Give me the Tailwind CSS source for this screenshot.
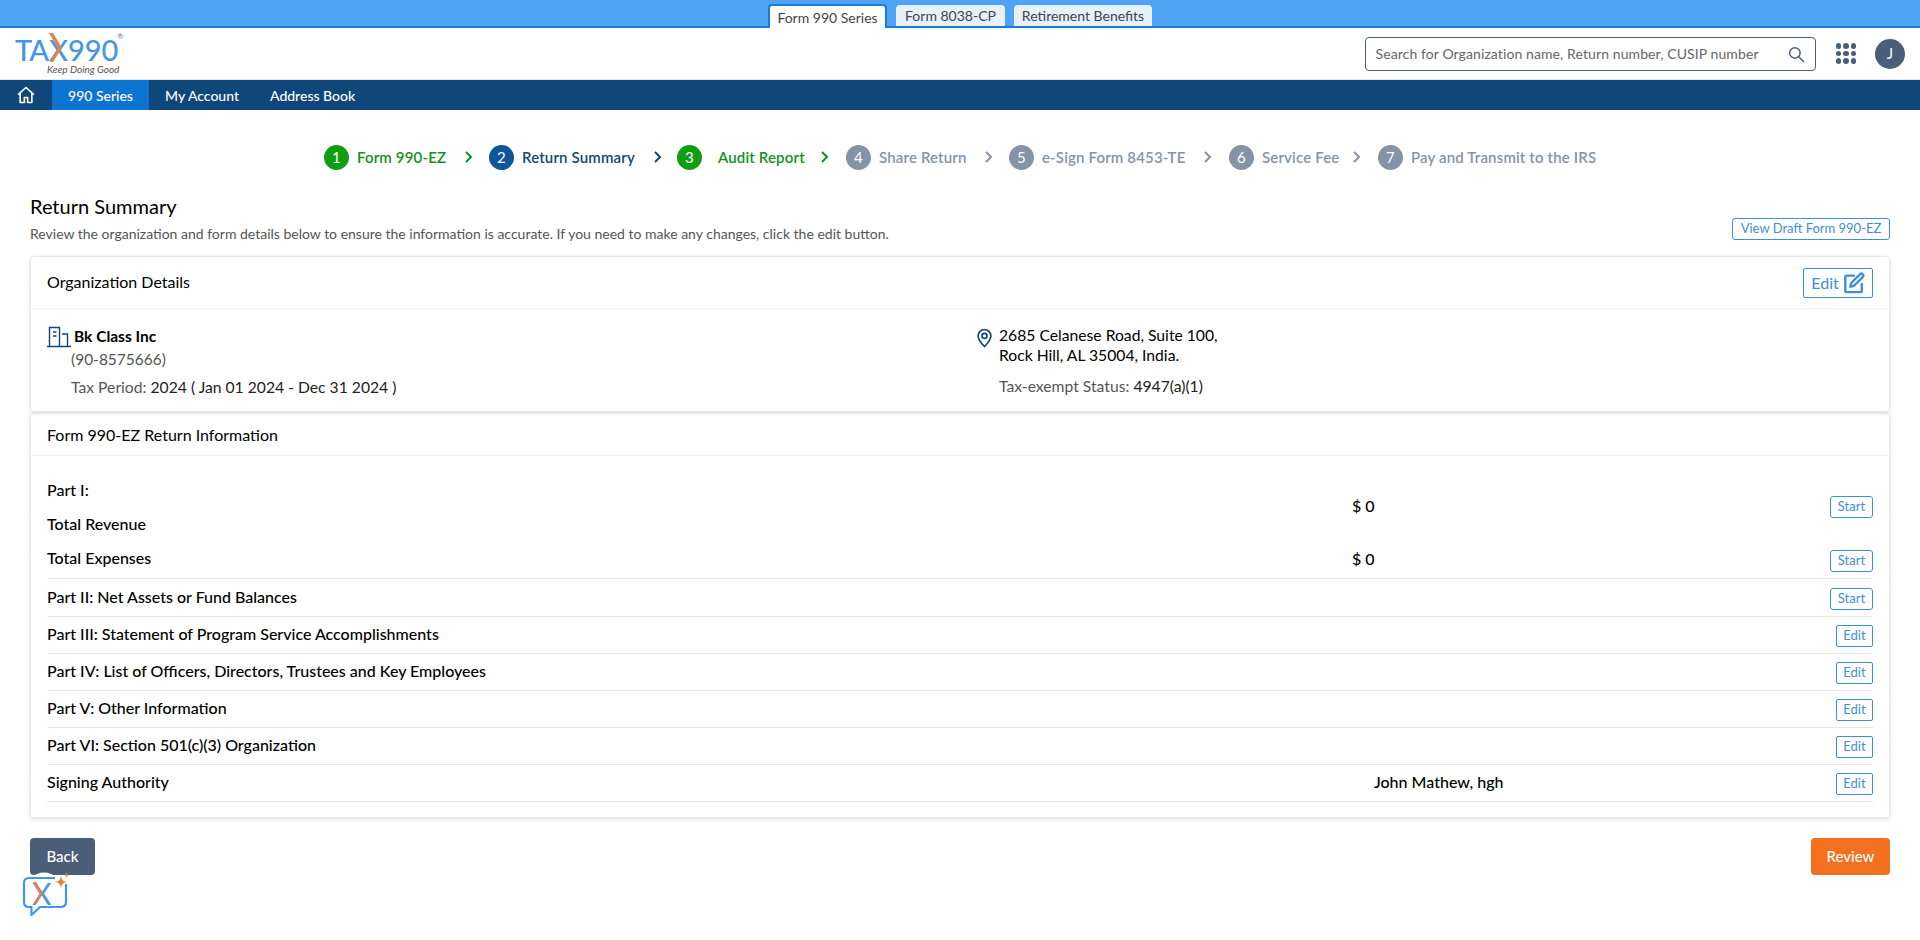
<!DOCTYPE html>
<html lang="en">
<head>
    <meta charset="UTF-8">
    <title>Return Summary</title>
    <script src="https://cdn.jsdelivr.net/npm/@tailwindcss/browser@4"></script>
</head>
<body class="bg-white h-[940px] overflow-hidden font-['Lato',sans-serif] text-[16px] text-black">
    <!-- Product tabs -->
    <div class="h-[28px] bg-[#4fa3f5] border-b-2 border-[#1a7bd9] flex items-end pl-[768px] gap-[9px] text-[14px] text-[#444]">
        <div class="h-[24px] -mb-[2px] w-[119px] bg-white border-2 border-b-0 border-[#1a7bd9] rounded-t flex items-center justify-center">Form 990 Series</div>
        <div class="h-[21px] w-[109px] bg-[#e6f1fd] rounded-t flex items-center justify-center">Form 8038-CP</div>
        <div class="h-[21px] w-[138px] bg-[#e6f1fd] rounded-t flex items-center justify-center">Retirement Benefits</div>
    </div>

    <!-- Header -->
    <div class="h-[52px] border-b border-gray-200 flex items-center pl-[15px] pr-[15px]">
        <div class="relative w-[112px] h-[50px]">
            <div class="flex text-[29px] leading-[26px] font-medium text-[#4596e6] pt-[8px]">
                <span class="tracking-[-1px]">TA</span><span class="ml-[1px]">X</span><span>990</span>
            </div>
            <svg class="absolute left-[33px] top-[4px]" width="15" height="30" viewBox="0 0 15 30"><path d="M1 0H5L14 15 5 29H2L10 15z" fill="#e8804a"/></svg>
            <span class="absolute left-[102px] top-[3px] text-[8px] text-gray-500 leading-none">®</span>
            <div class="absolute left-[32px] top-[34px] text-[10px] leading-[12px] italic text-[#555]">Keep Doing Good</div>
        </div>
        <div class="ml-auto w-[451px] h-[34px] border border-[#4a5e78] rounded flex items-center px-[10px] text-[14px] tracking-[0.1px] text-[#666]">
            <span>Search for Organization name, Return number, CUSIP number</span>
            <svg class="ml-auto" width="18" height="18" viewBox="0 0 24 24" fill="none" stroke="#4a5e78" stroke-width="2" stroke-linecap="round"><circle cx="10.5" cy="10.5" r="7"/><path d="M16 16l6 6"/></svg>
        </div>
        <div class="ml-[20px] grid grid-cols-3 gap-x-[2px] gap-y-[2px]">
            <span class="w-[5.5px] h-[5.5px] rounded-full bg-[#4a5e78]"></span><span class="w-[5.5px] h-[5.5px] rounded-full bg-[#4a5e78]"></span><span class="w-[5.5px] h-[5.5px] rounded-full bg-[#4a5e78]"></span>
            <span class="w-[5.5px] h-[5.5px] rounded-full bg-[#4a5e78]"></span><span class="w-[5.5px] h-[5.5px] rounded-full bg-[#4a5e78]"></span><span class="w-[5.5px] h-[5.5px] rounded-full bg-[#4a5e78]"></span>
            <span class="w-[5.5px] h-[5.5px] rounded-full bg-[#4a5e78]"></span><span class="w-[5.5px] h-[5.5px] rounded-full bg-[#4a5e78]"></span><span class="w-[5.5px] h-[5.5px] rounded-full bg-[#4a5e78]"></span>
        </div>
        <div class="ml-[19px] w-[30px] h-[30px] rounded-full bg-[#4a5e78] text-white text-[15px] flex items-center justify-center">J</div>
    </div>

    <!-- Nav -->
    <div class="h-[30px] bg-[#10477a] flex items-stretch text-white text-[14px] font-medium">
        <div class="w-[52px] flex items-center justify-center">
            <svg width="20" height="20" viewBox="0 0 24 24" fill="none" stroke="white" stroke-width="2" stroke-linejoin="round"><path d="M2.5 11.5L12 3l9.5 8.5M5 9.5V21h5v-6h4v6h5V9.5"/></svg>
        </div>
        <div class="w-[97px] bg-[#0d74d1] flex items-center justify-center">990 Series</div>
        <div class="pl-[16px] w-[121px] flex items-center">My Account</div>
        <div class="flex items-center">Address Book</div>
    </div>

    <!-- Stepper -->
    <div class="h-[60px] mt-[17px] pl-[324px] flex items-center whitespace-nowrap text-[15px] tracking-[0.15px] font-semibold">
        <span class="w-[25px] h-[25px] rounded-full bg-[#0f9d12] text-white font-normal flex items-center justify-center">1</span>
        <span class="ml-[8px] w-[95px] text-[#14911b]">Form 990-EZ</span>
        <svg class="ml-[11px]" width="12" height="14" viewBox="0 0 12 14" fill="none" stroke="#14911b" stroke-width="2"><path d="M3 2l5 5-5 5"/></svg>
        <span class="ml-[14px] w-[25px] h-[25px] rounded-full bg-[#0f5599] text-white font-normal flex items-center justify-center">2</span>
        <span class="ml-[8px] w-[117px] text-[#10477a]">Return Summary</span>
        <svg class="ml-[13px]" width="12" height="14" viewBox="0 0 12 14" fill="none" stroke="#10477a" stroke-width="2"><path d="M3 2l5 5-5 5"/></svg>
        <span class="ml-[13px] w-[25px] h-[25px] rounded-full bg-[#0f9d12] text-white font-normal flex items-center justify-center">3</span>
        <span class="ml-[16px] w-[87px] text-[#14911b]">Audit Report</span>
        <svg class="ml-[14px]" width="12" height="14" viewBox="0 0 12 14" fill="none" stroke="#14911b" stroke-width="2"><path d="M3 2l5 5-5 5"/></svg>
        <span class="ml-[15px] w-[25px] h-[25px] rounded-full bg-[#8593a6] text-white font-normal flex items-center justify-center">4</span>
        <span class="ml-[8px] w-[89px] text-[#8593a6]">Share Return</span>
        <svg class="ml-[15px]" width="12" height="14" viewBox="0 0 12 14" fill="none" stroke="#8593a6" stroke-width="2"><path d="M3 2l5 5-5 5"/></svg>
        <span class="ml-[14px] w-[25px] h-[25px] rounded-full bg-[#8593a6] text-white font-normal flex items-center justify-center">5</span>
        <span class="ml-[8px] w-[145px] text-[#8593a6]">e-Sign Form 8453-TE</span>
        <svg class="ml-[15px]" width="12" height="14" viewBox="0 0 12 14" fill="none" stroke="#8593a6" stroke-width="2"><path d="M3 2l5 5-5 5"/></svg>
        <span class="ml-[15px] w-[25px] h-[25px] rounded-full bg-[#8593a6] text-white font-normal flex items-center justify-center">6</span>
        <span class="ml-[8px] w-[74px] text-[#8593a6]">Service Fee</span>
        <svg class="ml-[15px]" width="12" height="14" viewBox="0 0 12 14" fill="none" stroke="#8593a6" stroke-width="2"><path d="M3 2l5 5-5 5"/></svg>
        <span class="ml-[15px] w-[25px] h-[25px] rounded-full bg-[#8593a6] text-white font-normal flex items-center justify-center">7</span>
        <span class="ml-[8px] text-[#8593a6]">Pay and Transmit to the IRS</span>
    </div>

    <!-- Main -->
    <div class="px-[30px]">
        <div class="flex items-end h-[69px] pb-[12px]">
            <div>
                <h1 class="text-[20px] leading-[28px] mb-[4px]">Return Summary</h1>
                <p class="text-[14px] leading-[20px] text-[#555]">Review the organization and form details below to ensure the information is accurate. If you need to make any changes, click the edit button.</p>
            </div>
            <button class="ml-auto h-[22px] w-[158px] border border-[#3f8fd6] rounded-[3px] text-[13px] text-[#3f8fd6] mb-[4px]">View Draft Form 990-EZ</button>
        </div>

        <!-- Organization card -->
        <div class="h-[156px] border border-gray-200 rounded shadow-[0_1px_4px_rgba(0,0,0,0.12)]">
            <div class="h-[52px] px-[16px] flex items-center border-b border-gray-100">
                <span class="mb-[1px]">Organization Details</span>
                <button class="ml-auto w-[70px] h-[30px] border border-[#3f8fd6] rounded-[2px] text-[#3f8fd6] flex items-center justify-center gap-[4px] text-[16px]">Edit
                    <svg width="22" height="22" viewBox="0 0 24 24" fill="none" stroke="#3f8fd6" stroke-width="2.600" stroke-linecap="round" stroke-linejoin="round"><path d="M12 4H4a1.500 1.500 0 0 0-1.500 1.500v15A1.500 1.500 0 0 0 4 22h15a1.500 1.500 0 0 0 1.500-1.500V13"/><path d="M18.500 2.500a2.100 2.100 0 0 1 3 3L12 15l-4 1 1-4z"/></svg>
                </button>
            </div>
            <div class="grid grid-cols-[929px_1fr] pl-[16px] pt-[16px]">
                <div>
                    <div class="flex items-center h-[24px] font-bold text-[15.500px]">
                        <svg class="mr-[3px]" width="24" height="22" viewBox="0 0 24 22" fill="none" stroke="#10477a" stroke-width="1.400"><path d="M0 20.500h24M2.500 20.500V1.500h10v19M15 8h5.500v12.500M6 6h3.500M6 10h3.500"/></svg>
                        Bk Class Inc
                    </div>
                    <div class="pl-[24px] text-[#555] text-[15.500px] leading-[20px]">(90-8575666)</div>
                    <div class="pl-[24px] mt-[8px] leading-[20px] text-[15.700px] text-[#555]">Tax Period: <span class="text-[#222]">2024 ( Jan 01 2024 - Dec 31 2024 )</span></div>
                </div>
                <div class="flex text-[15.700px]">
                    <svg class="mt-[3px] mr-[6px]" width="17" height="20" viewBox="0 0 24 28" fill="none" stroke="#10477a" stroke-width="2.400"><path d="M12 26C6 20 3 15.500 3 11a9 9 0 0 1 18 0c0 4.500-3 9-9 15z"/><circle cx="12" cy="11" r="3.500"/></svg>
                    <div>
                        <div class="leading-[20px]">2685 Celanese Road, Suite 100,<br>Rock Hill, AL 35004, India.</div>
                        <div class="mt-[11px] leading-[20px] text-[#555]">Tax-exempt Status: <span class="text-[#222]">4947(a)(1)</span></div>
                    </div>
                </div>
            </div>
        </div>

        <!-- Return information card -->
        <div class="mt-[1px] h-[405px] border border-gray-200 rounded shadow-[0_1px_4px_rgba(0,0,0,0.12)]">
            <div class="h-[42px] px-[16px] flex items-center border-b border-gray-100">Form 990-EZ Return Information</div>
            <div class="px-[16px] pt-[17px] font-medium">
                <div class="grid grid-cols-[1305px_1fr_auto] items-center h-[68px]">
                    <div><div class="leading-[34px]">Part I:</div><div class="leading-[34px]">Total Revenue</div></div>
                    <div class="mb-[2px]">$ 0</div>
                    <button class="w-[43px] h-[22px] border border-[#3f8fd6] rounded-[3px] text-[13px] text-[#3f8fd6] font-normal">Start</button>
                </div>
                <div class="grid grid-cols-[1305px_1fr_auto] items-center h-[38px] border-b border-gray-200">
                    <div class="mb-[3px]">Total Expenses</div>
                    <div class="mb-[2px]">$ 0</div>
                    <button class="mt-[2px] w-[43px] h-[22px] border border-[#3f8fd6] rounded-[3px] text-[13px] text-[#3f8fd6] font-normal">Start</button>
                </div>
                <div class="flex items-center justify-between h-[38px] border-b border-gray-200">
                    <span class="mb-[2px]">Part II: Net Assets or Fund Balances</span>
                    <button class="mt-[2px] w-[43px] h-[22px] border border-[#3f8fd6] rounded-[3px] text-[13px] text-[#3f8fd6] font-normal">Start</button>
                </div>
                <div class="flex items-center justify-between h-[37px] border-b border-gray-200">
                    <span class="mb-[2px]">Part III: Statement of Program Service Accomplishments</span>
                    <button class="mt-[2px] w-[37px] h-[22px] border border-[#3f8fd6] rounded-[2px] text-[13px] text-[#3f8fd6] font-normal">Edit</button>
                </div>
                <div class="flex items-center justify-between h-[37px] border-b border-gray-200">
                    <span class="mb-[2px]">Part IV: List of Officers, Directors, Trustees and Key Employees</span>
                    <button class="mt-[2px] w-[37px] h-[22px] border border-[#3f8fd6] rounded-[2px] text-[13px] text-[#3f8fd6] font-normal">Edit</button>
                </div>
                <div class="flex items-center justify-between h-[37px] border-b border-gray-200">
                    <span class="mb-[2px]">Part V: Other Information</span>
                    <button class="mt-[2px] w-[37px] h-[22px] border border-[#3f8fd6] rounded-[2px] text-[13px] text-[#3f8fd6] font-normal">Edit</button>
                </div>
                <div class="flex items-center justify-between h-[37px] border-b border-gray-200">
                    <span class="mb-[2px]">Part VI: Section 501(c)(3) Organization</span>
                    <button class="mt-[2px] w-[37px] h-[22px] border border-[#3f8fd6] rounded-[2px] text-[13px] text-[#3f8fd6] font-normal">Edit</button>
                </div>
                <div class="grid grid-cols-[1327px_1fr_auto] items-center h-[37px] border-b border-gray-200">
                    <div class="mb-[2px]">Signing Authority</div>
                    <div class="mb-[2px]">John Mathew, hgh</div>
                    <button class="mt-[2px] w-[37px] h-[22px] border border-[#3f8fd6] rounded-[2px] text-[13px] text-[#3f8fd6] font-normal">Edit</button>
                </div>
            </div>
        </div>

        <!-- Footer actions -->
        <div class="flex justify-between mt-[20px]">
            <button class="w-[65px] h-[37px] bg-[#4a5e78] text-white rounded text-[15px] font-medium">Back</button>
            <button class="w-[79px] h-[37px] bg-[#f37021] text-white rounded text-[15px] font-medium">Review</button>
        </div>
    </div>

    <!-- Chat launcher -->
    <div class="absolute left-[22px] top-[870px] w-[50px] h-[48px]">
        <svg class="absolute inset-0" width="50" height="48" viewBox="0 0 50 48" fill="none">
            <path d="M8 8Q22-3 36 8z" fill="white"/>
            <path d="M33 8H7Q2 8 2 13V32Q2 37 7 37H9.500V45L18 37H38Q44 37 44 32V14" fill="white"/>
            <path d="M33 8H7Q2 8 2 13V32Q2 37 7 37H9.500V45L18 37H38Q44 37 44 32V14" stroke="#3f96ea" stroke-width="2.200" stroke-linejoin="round"/>
        </svg>
        <span class="absolute left-[10px] top-[6px] text-[30px] leading-[34px] text-[#4596e6]">X</span>
        <svg class="absolute inset-0" width="50" height="48" viewBox="0 0 50 48">
            <path d="M11 12H14L21 23 14 34H11.500L18 23z" fill="#e8804a"/>
            <path d="M39 5c.5 5 2 6.500 6.500 7-4.500.5-6 2-6.500 7-.5-5-2-6.500-6.500-7 4.500-.5 6-2 6.500-7z" fill="#ed7d3a"/>
            <path d="M44.500 2c.2 2 .8 2.600 2.500 3-1.700.4-2.300 1-2.500 3-.2-2-.8-2.600-2.500-3 1.700-.4 2.300-1 2.500-3z" fill="#ed7d3a"/>
        </svg>
    </div>
</body>
</html>
